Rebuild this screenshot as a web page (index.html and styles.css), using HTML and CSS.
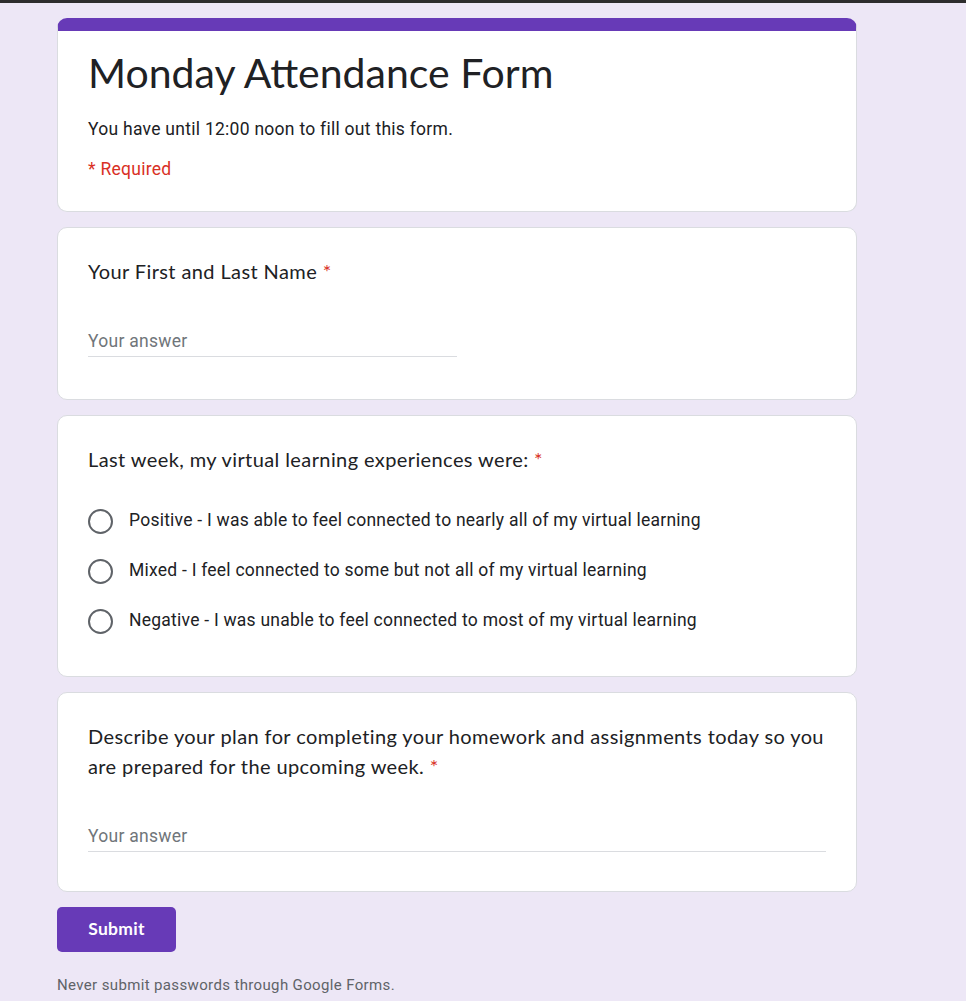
FILE: index.html
```html
<!DOCTYPE html>
<html lang="en">
<head>
<meta charset="utf-8">
<title>Monday Attendance Form</title>
<link rel="stylesheet" href="styles.css">
</head>
<body>
<div class="topbar"></div>
<main class="form">
  <section class="card card-header">
    <h1 class="title">Monday Attendance Form</h1>
    <p class="desc">You have until 12:00 noon to fill out this form.</p>
    <p class="required-note">* Required</p>
  </section>

  <section class="card card-short">
    <div class="question">Your First and Last Name <span class="star">*</span></div>
    <div class="answer answer-short">Your answer</div>
  </section>

  <section class="card card-choice">
    <div class="question">Last week, my virtual learning experiences were: <span class="star">*</span></div>
    <div class="options">
      <label class="option"><span class="radio"></span><span class="opt-text">Positive - I was able to feel connected to nearly all of my virtual learning</span></label>
      <label class="option"><span class="radio"></span><span class="opt-text">Mixed - I feel connected to some but not all of my virtual learning</span></label>
      <label class="option"><span class="radio"></span><span class="opt-text">Negative - I was unable to feel connected to most of my virtual learning</span></label>
    </div>
  </section>

  <section class="card card-long">
    <div class="question">Describe your plan for completing your homework and assignments today so you<br>are prepared for the upcoming week. <span class="star">*</span></div>
    <div class="answer answer-long">Your answer</div>
  </section>

  <button class="submit" type="button">Submit</button>
  <p class="footer">Never submit passwords through Google Forms.</p>
</main>
</body>
</html>
```

FILE: styles.css
```css
html, body {
  margin: 0;
  padding: 0;
}

body {
  background: #ede7f6;
  font-family: Roboto, "Liberation Sans", Arial, sans-serif;
  color: #202124;
  min-height: 1001px;
}

.topbar {
  height: 3px;
  background: #2d2d2d;
}

.form {
  width: 800px;
  margin: 15px 0 0 57px;
  display: flex;
  flex-direction: column;
}

.card {
  background: #fff;
  border: 1px solid #dadce0;
  border-radius: 10px;
  padding: 28px 30px 0;
  margin-bottom: 15px;
}

.card-header {
  border-top: 13px solid #673ab7;
  padding-top: 16px;
  padding-bottom: 27px;
}

.title {
  margin: 0;
  font-family: Lato, "Open Sans", sans-serif;
  font-weight: 400;
  font-size: 41px;
  line-height: 52px;
  color: #202124;
}

.desc {
  margin: 15px 0 0;
  font-size: 17.5px;
  line-height: 30px;
  letter-spacing: 0.27px;
}

.required-note {
  margin: 10px 0 0;
  font-size: 17.5px;
  line-height: 30px;
  letter-spacing: 0.27px;
  color: #d93025;
}

.question {
  font-family: Lato, "Open Sans", sans-serif;
  font-size: 20px;
  line-height: 30px;
  color: #202124;
  letter-spacing: 0.4px;
}

.star {
  color: #d93025;
}

.answer {
  margin-top: 40px;
  font-size: 17.5px;
  line-height: 30px;
  letter-spacing: 0.27px;
  color: #70757a;
  border-bottom: 1px solid #dadce0;
}

.answer-short {
  width: 369px;
}

.card-short {
  padding-bottom: 42px;
}

.card-long {
  padding-bottom: 39px;
}

.card-choice {
  padding-bottom: 31px;
}

.options {
  margin-top: 21px;
  display: flex;
  flex-direction: column;
}

.option {
  height: 50px;
  display: flex;
  align-items: center;
  gap: 16px;
  font-size: 17.5px;
  letter-spacing: 0.24px;
  color: #202124;
}

.radio {
  box-sizing: border-box;
  width: 25px;
  height: 25px;
  border: 2.5px solid #5f6368;
  border-radius: 50%;
  flex: none;
  margin-top: 2px;
}

.submit {
  align-self: flex-start;
  width: 119px;
  height: 45px;
  border: none;
  border-radius: 5px;
  background: #673ab7;
  color: #fff;
  font-family: Lato, "Open Sans", sans-serif;
  font-weight: 700;
  font-size: 17.5px;
  letter-spacing: 0.3px;
  padding: 0 0 2px;
}

.footer {
  margin: 23px 0 0;
  font-size: 15px;
  line-height: 20px;
  color: #5f6368;
  letter-spacing: 0.36px;
}
```
